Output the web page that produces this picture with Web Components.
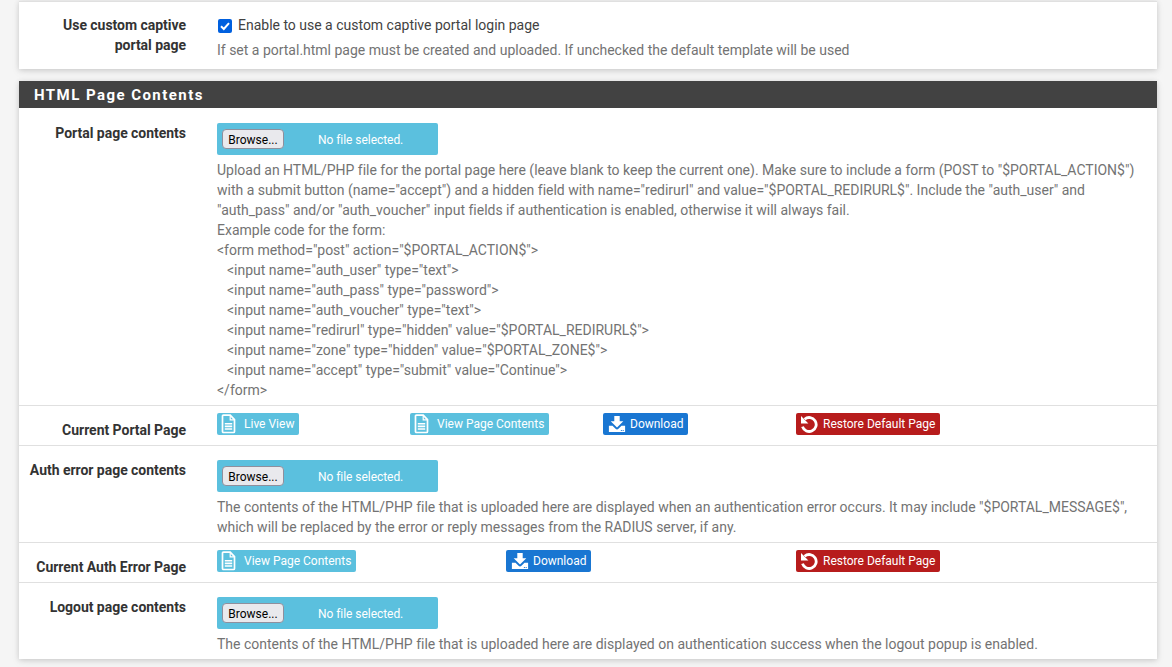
<!DOCTYPE html>
<html>
<head>
<meta charset="utf-8">
<title>Captive Portal</title>
<style>
    html, body { margin: 0; height: 667px; overflow: hidden; }
    body {
        background: #f5f5f5;
        font-family: Roboto, "Liberation Sans", sans-serif;
        font-size: 14px;
        line-height: 20px;
        color: #424242;
    }
    .page { padding: 1px 15px 0 19px; }
    .gap { height: 12px; }
    .code { padding-left: 10px; }
</style>
</head>
<body>
<div class="page">
    <cp-panel>
        <cp-row label="Use custom captive portal page" kind="top">
            <cp-check>Enable to use a custom captive portal login page</cp-check>
            <cp-help>If set a portal.html page must be created and uploaded. If unchecked the default template will be used</cp-help>
        </cp-row>
    </cp-panel>
    <div class="gap"></div>
    <cp-panel heading="HTML Page Contents">
        <cp-row label="Portal page contents" kind="first">
            <cp-file></cp-file>
            <cp-help>Upload an HTML/PHP file for the portal page here (leave blank to keep the current one). Make sure to include a form (POST to "$PORTAL_ACTION$") with a submit button (name="accept") and a hidden field with name="redirurl" and value="$PORTAL_REDIRURL$". Include the "auth_user" and "auth_pass" and/or "auth_voucher" input fields if authentication is enabled, otherwise it will always fail.<br>
            Example code for the form:<br>
            &lt;form method="post" action="$PORTAL_ACTION$"&gt;<br>
            <span class="code">&lt;input name="auth_user" type="text"&gt;</span><br>
            <span class="code">&lt;input name="auth_pass" type="password"&gt;</span><br>
            <span class="code">&lt;input name="auth_voucher" type="text"&gt;</span><br>
            <span class="code">&lt;input name="redirurl" type="hidden" value="$PORTAL_REDIRURL$"&gt;</span><br>
            <span class="code">&lt;input name="zone" type="hidden" value="$PORTAL_ZONE$"&gt;</span><br>
            <span class="code">&lt;input name="accept" type="submit" value="Continue"&gt;</span><br>
            &lt;/form&gt;</cp-help>
        </cp-row>
        <cp-row label="Current Portal Page" kind="buttons">
            <cp-buttons columns="193px 193px 193px 1fr">
                <cp-btn icon="file" tone="info">Live View</cp-btn>
                <cp-btn icon="file" tone="info">View Page Contents</cp-btn>
                <cp-btn icon="download" tone="primary">Download</cp-btn>
                <cp-btn icon="undo" tone="danger">Restore Default Page</cp-btn>
            </cp-buttons>
        </cp-row>
        <cp-row label="Auth error page contents">
            <cp-file></cp-file>
            <cp-help>The contents of the HTML/PHP file that is uploaded here are displayed when an authentication error occurs. It may include "$PORTAL_MESSAGE$", which will be replaced by the error or reply messages from the RADIUS server, if any.</cp-help>
        </cp-row>
        <cp-row label="Current Auth Error Page" kind="buttons">
            <cp-buttons columns="289px 290px 1fr">
                <cp-btn icon="file" tone="info">View Page Contents</cp-btn>
                <cp-btn icon="download" tone="primary">Download</cp-btn>
                <cp-btn icon="undo" tone="danger">Restore Default Page</cp-btn>
            </cp-buttons>
        </cp-row>
        <cp-row label="Logout page contents">
            <cp-file></cp-file>
            <cp-help>The contents of the HTML/PHP file that is uploaded here are displayed on authentication success when the logout popup is enabled.</cp-help>
        </cp-row>
    </cp-panel>
</div>

<script>
const ICONS = {
    file: `<svg width="15" height="20" viewBox="0 0 15 20"><path fill="none" stroke="#fff" stroke-width="1.7" d="M1.500 2.200q0-1 1-1h6.700l4.300 4.400v11.900q0 1-1 1h-10q-1 0-1-1z"/><path fill="#fff" d="M8.600 1.200h1.200v4h3.900v1.200h-5.100zM3.800 9h7.400v1.600h-7.400zM3.800 11.600h7.400v1.600h-7.400zM3.800 14.200h7.400v1.600h-7.400z"/></svg>`,
    download: `<svg width="18" height="20" viewBox="0 0 20 20"><path fill="#fff" d="M1 12h4l3.400 3.400q1.600 1.500 3.200 0l3.400-3.400h4v7h-18z"/><path fill="#fff" d="M7 1h6v6h4l-7 7-7-7h4z"/><path fill="#1976d2" d="M14.300 16.700h1.100v1h-1.100zM16.300 16.700h1.100v1h-1.100z"/></svg>`,
    undo: `<svg width="18" height="20" viewBox="0 0 18 20"><path fill="none" stroke="#fff" stroke-width="2.800" d="M4.600 5.200a7 7 0 1 1-2.100 7.400"/><path fill="#fff" d="M1 2l7.400 7.400h-7.400z"/></svg>`
};

class CpPanel extends HTMLElement {
    constructor() {
        super();
        this.attachShadow({mode: 'open'});
    }

    connectedCallback() {
        const heading = this.getAttribute('heading');
        this.shadowRoot.innerHTML = `
            <style>
                :host {
                    display: block;
                    background: #fff;
                    box-shadow: 0 1px 5px rgba(0, 0, 0, 0.16), 0 3px 10px rgba(0, 0, 0, 0.05);
                }
                h2 {
                    margin: 0;
                    height: 27px;
                    padding-left: 15px;
                    background: #424242;
                    color: #fff;
                    font-size: 15px;
                    font-weight: 700;
                    line-height: 28px;
                    letter-spacing: 1.45px;
                }
            </style>
            ${heading ? `<h2>${heading}</h2>` : ''}
            <slot></slot>
        `;
    }
}

class CpRow extends HTMLElement {
    constructor() {
        super();
        this.attachShadow({mode: 'open'});
    }

    connectedCallback() {
        this.shadowRoot.innerHTML = `
            <style>
                :host {
                    display: grid;
                    grid-template-columns: 167px 1fr;
                    column-gap: 31px;
                    padding: 14px 15px 5px 0;
                    border-top: 1px solid #e0e0e0;
                }
                :host([kind="first"]) { border-top: 0; padding-top: 15px; }
                :host([kind="top"]) { padding-top: 13px; padding-bottom: 9px; }
                :host([kind="buttons"]) { padding-top: 7px; padding-bottom: 10px; }
                .label {
                    padding-left: 7px;
                    text-align: right;
                    font-weight: 700;
                    color: #333;
                    letter-spacing: -0.03px;
                }
                :host([kind="buttons"]) .label { padding-top: 7px; margin-bottom: -10px; }
                .control { min-width: 0; }
            </style>
            <div class="label">${this.getAttribute('label')}</div>
            <div class="control"><slot></slot></div>
        `;
    }
}

class CpCheck extends HTMLElement {
    constructor() {
        super();
        this.attachShadow({mode: 'open'});
        this.shadowRoot.innerHTML = `
            <style>
                :host { display: flex; align-items: center; gap: 6px; padding-left: 1px; letter-spacing: -0.006px; }
                .box {
                    width: 14px;
                    height: 14px;
                    margin-top: 2px;
                    border-radius: 2px;
                    background: #0060df;
                    display: flex;
                }
            </style>
            <span class="box">
                <svg width="14" height="14" viewBox="0 0 14 14"><path fill="none" stroke="#fff" stroke-width="2" d="M3 7.300l2.800 2.700 5.200-5.800"/></svg>
            </span>
            <span><slot></slot></span>
        `;
    }
}

class CpHelp extends HTMLElement {
    constructor() {
        super();
        this.attachShadow({mode: 'open'});
        this.shadowRoot.innerHTML = `
            <style>
                :host { display: block; margin-top: 5px; color: #737373; letter-spacing: -0.006px; }
            </style>
            <slot></slot>
        `;
    }
}

class CpFile extends HTMLElement {
    constructor() {
        super();
        this.attachShadow({mode: 'open'});
        this.shadowRoot.innerHTML = `
            <style>
                :host {
                    display: flex;
                    align-items: center;
                    box-sizing: border-box;
                    width: 221px;
                    height: 32px;
                    padding-left: 5px;
                    background: #5bc0de;
                    border-radius: 2px;
                    color: #fff;
                    font-size: 12px;
                }
                button {
                    box-sizing: border-box;
                    width: 62px;
                    height: 20px;
                    padding: 2px 0 0;
                    border: 1px solid #8f8f9d;
                    border-radius: 4px;
                    background: #e9e9ed;
                    color: #000;
                    font: 12px Roboto, "Liberation Sans", sans-serif;
                }
                span { margin-left: 34px; padding-top: 2px; letter-spacing: -0.05px; }
            </style>
            <button type="button">Browse...</button>
            <span>No file selected.</span>
        `;
    }
}

class CpButtons extends HTMLElement {
    constructor() {
        super();
        this.attachShadow({mode: 'open'});
    }

    connectedCallback() {
        this.shadowRoot.innerHTML = `
            <style>
                :host {
                    display: grid;
                    grid-template-columns: ${this.getAttribute('columns')};
                    justify-items: start;
                }
            </style>
            <slot></slot>
        `;
    }
}

class CpBtn extends HTMLElement {
    constructor() {
        super();
        this.attachShadow({mode: 'open'});
    }

    connectedCallback() {
        this.shadowRoot.innerHTML = `
            <style>
                :host {
                    display: inline-flex;
                    align-items: center;
                    box-sizing: border-box;
                    height: 22px;
                    padding: 0 5px 0 4px;
                    gap: 8px;
                    border-radius: 2px;
                    font-size: 12px;
                    color: #fff;
                    white-space: nowrap;
                }
                :host([tone="info"]) { background: #5bc0de; }
                :host([tone="primary"]) { background: #1976d2; gap: 4px; padding-left: 5px; }
                :host([tone="danger"]) { background: #b71c1c; gap: 5px; padding-left: 4px; }
                svg { display: block; }
            </style>
            ${ICONS[this.getAttribute('icon')]}
            <slot></slot>
        `;
    }
}

customElements.define('cp-panel', CpPanel);
customElements.define('cp-row', CpRow);
customElements.define('cp-check', CpCheck);
customElements.define('cp-help', CpHelp);
customElements.define('cp-file', CpFile);
customElements.define('cp-buttons', CpButtons);
customElements.define('cp-btn', CpBtn);
</script>
</body>
</html>
